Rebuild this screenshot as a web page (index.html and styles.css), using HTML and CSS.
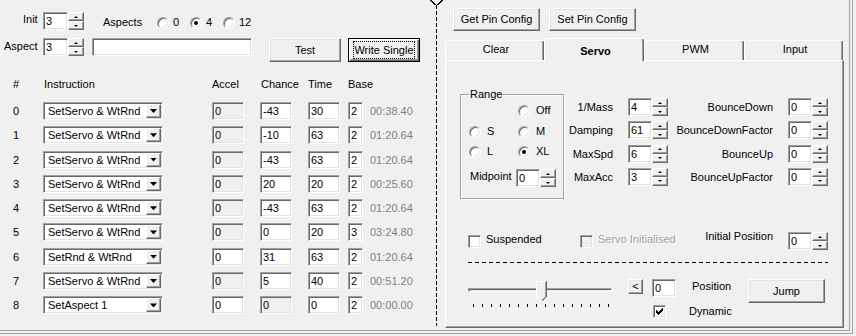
FILE: index.html
```html
<!DOCTYPE html>
<html lang="en">
<head>
  <meta charset="UTF-8" />
  <meta name="viewport" content="width=device-width, initial-scale=1.0"/>
  <title>Servo Config</title>
  <link rel="stylesheet" href="styles.css">
</head>
<body>
  <div class="outer">
    <div class="window">

      <div class="left">
        <div class="row-init">
          <span class="lbl-init">Init</span>
          <span class="spin spin-wide"><input class="edit" value="3"><span class="updown"><span class="ud up"></span><span class="ud down"></span></span></span>
          <span class="lbl-aspects">Aspects</span>
          <label class="opt"><span class="radio"></span>0</label>
          <label class="opt"><span class="radio on"></span>4</label>
          <label class="opt"><span class="radio"></span>12</label>
        </div>

        <div class="row-aspect">
          <span class="lbl-aspect">Aspect</span>
          <span class="spin spin-wide"><input class="edit" value="3"><span class="updown"><span class="ud up"></span><span class="ud down"></span></span></span>
          <input class="edit edit-long" value="">
          <button class="btn btn-test">Test</button>
          <button class="btn btn-write">Write Single</button>
        </div>

        <div class="thead">
          <span class="rnum">#</span>
          <span class="th-instr">Instruction</span>
          <span>Accel</span>
          <span class="th-chance">Chance</span>
          <span>Time</span>
          <span>Base</span>
        </div>

        <div class="trows">
          <div class="trow">
            <span class="rnum">0</span>
            <div class="combo"><span class="combo-text">SetServo &amp; WtRnd</span><span class="drop"></span></div>
            <input class="edit e-num ro" value="0"><input class="edit e-num" value="-43"><input class="edit e-num" value="30"><input class="edit e-base" value="2">
            <span class="ttime">00:38.40</span>
          </div>
          <div class="trow">
            <span class="rnum">1</span>
            <div class="combo"><span class="combo-text">SetServo &amp; WtRnd</span><span class="drop"></span></div>
            <input class="edit e-num ro" value="0"><input class="edit e-num" value="-10"><input class="edit e-num" value="63"><input class="edit e-base" value="2">
            <span class="ttime">01:20.64</span>
          </div>
          <div class="trow">
            <span class="rnum">2</span>
            <div class="combo"><span class="combo-text">SetServo &amp; WtRnd</span><span class="drop"></span></div>
            <input class="edit e-num ro" value="0"><input class="edit e-num" value="-43"><input class="edit e-num" value="63"><input class="edit e-base" value="2">
            <span class="ttime">01:20.64</span>
          </div>
          <div class="trow">
            <span class="rnum">3</span>
            <div class="combo"><span class="combo-text">SetServo &amp; WtRnd</span><span class="drop"></span></div>
            <input class="edit e-num ro" value="0"><input class="edit e-num" value="20"><input class="edit e-num" value="20"><input class="edit e-base" value="2">
            <span class="ttime">00:25.60</span>
          </div>
          <div class="trow">
            <span class="rnum">4</span>
            <div class="combo"><span class="combo-text">SetServo &amp; WtRnd</span><span class="drop"></span></div>
            <input class="edit e-num ro" value="0"><input class="edit e-num" value="-43"><input class="edit e-num" value="63"><input class="edit e-base" value="2">
            <span class="ttime">01:20.64</span>
          </div>
          <div class="trow">
            <span class="rnum">5</span>
            <div class="combo"><span class="combo-text">SetServo &amp; WtRnd</span><span class="drop"></span></div>
            <input class="edit e-num ro" value="0"><input class="edit e-num" value="0"><input class="edit e-num" value="20"><input class="edit e-base" value="3">
            <span class="ttime">03:24.80</span>
          </div>
          <div class="trow">
            <span class="rnum">6</span>
            <div class="combo"><span class="combo-text">SetRnd &amp; WtRnd</span><span class="drop"></span></div>
            <input class="edit e-num" value="0"><input class="edit e-num" value="31"><input class="edit e-num" value="63"><input class="edit e-base" value="2">
            <span class="ttime">01:20.64</span>
          </div>
          <div class="trow">
            <span class="rnum">7</span>
            <div class="combo"><span class="combo-text">SetServo &amp; WtRnd</span><span class="drop"></span></div>
            <input class="edit e-num ro" value="0"><input class="edit e-num" value="5"><input class="edit e-num" value="40"><input class="edit e-base" value="2">
            <span class="ttime">00:51.20</span>
          </div>
          <div class="trow">
            <span class="rnum">8</span>
            <div class="combo"><span class="combo-text">SetAspect 1</span><span class="drop"></span></div>
            <input class="edit e-num" value="0"><input class="edit e-num ro" value="0"><input class="edit e-num" value="0"><input class="edit e-base" value="2">
            <span class="ttime">00:00.00</span>
          </div>
        </div>
      </div>

      <div class="splitter">
        <svg class="fork" width="13" height="6" viewBox="0 0 13 6" shape-rendering="crispEdges">
          <path d="M0.5 0 L5.5 5 M12.5 0 L7.5 5" stroke="#000" fill="none"/>
        </svg>
      </div>

      <div class="right">
        <div class="pinbtns">
          <button class="btn btn-pin">Get Pin Config</button>
          <button class="btn btn-pin">Set Pin Config</button>
        </div>

        <div class="tabs">
          <div class="tab">Clear</div>
          <div class="tab tab-on">Servo</div>
          <div class="tab tab-wide">PWM</div>
          <div class="tab">Input</div>
        </div>

        <div class="tab-page">
          <div class="servo-top">
            <div class="group">
              <span class="group-label">Range</span>
              <div class="range">
                <span></span>
                <label class="opt2"><span class="radio"></span>Off</label>
                <label class="opt2"><span class="radio"></span>S</label>
                <label class="opt2"><span class="radio"></span>M</label>
                <label class="opt2"><span class="radio"></span>L</label>
                <label class="opt2"><span class="radio on"></span>XL</label>
              </div>
              <div class="mid">
                <span class="mid-label">Midpoint</span>
                <span class="spin"><input class="edit" value="0"><span class="updown"><span class="ud up"></span><span class="ud down"></span></span></span>
              </div>
            </div>

            <div class="params">
              <span class="plabel">1/Mass</span>
              <span class="spin"><input class="edit" value="4"><span class="updown"><span class="ud up"></span><span class="ud down"></span></span></span>
              <span class="plabel">BounceDown</span>
              <span class="spin"><input class="edit" value="0"><span class="updown"><span class="ud up"></span><span class="ud down"></span></span></span>

              <span class="plabel">Damping</span>
              <span class="spin"><input class="edit" value="61"><span class="updown"><span class="ud up"></span><span class="ud down"></span></span></span>
              <span class="plabel">BounceDownFactor</span>
              <span class="spin"><input class="edit" value="0"><span class="updown"><span class="ud up"></span><span class="ud down"></span></span></span>

              <span class="plabel">MaxSpd</span>
              <span class="spin"><input class="edit" value="6"><span class="updown"><span class="ud up"></span><span class="ud down"></span></span></span>
              <span class="plabel">BounceUp</span>
              <span class="spin"><input class="edit" value="0"><span class="updown"><span class="ud up"></span><span class="ud down"></span></span></span>

              <span class="plabel">MaxAcc</span>
              <span class="spin"><input class="edit" value="3"><span class="updown"><span class="ud up"></span><span class="ud down"></span></span></span>
              <span class="plabel">BounceUpFactor</span>
              <span class="spin"><input class="edit" value="0"><span class="updown"><span class="ud up"></span><span class="ud down"></span></span></span>
            </div>
          </div>

          <div class="checks">
            <label class="chk chk-susp"><span class="cb"></span><span class="chk-text">Suspended</span></label>
            <label class="chk chk-init"><span class="cb cb-off"></span><span class="chk-text">Servo Initialised</span></label>
            <span class="ilabel">Initial Position</span>
            <span class="spin spin-low"><input class="edit" value="0"><span class="updown"><span class="ud up"></span><span class="ud down"></span></span></span>
          </div>

          <div class="dash"></div>

          <div class="servo-bottom">
            <div class="slider">
              <div class="track"></div>
              <div class="ticks"></div>
              <svg class="thumb" width="11" height="21" viewBox="0 0 11 21" shape-rendering="crispEdges">
                <path d="M0 0 H11 V16 L5.5 21.5 L0 16 Z" fill="#f0f0f0"/>
                <path d="M0.5 16 V0.5 H10" stroke="#fff" fill="none"/>
                <path d="M0.5 15.5 L5 20" stroke="#fff" fill="none"/>
                <path d="M10.5 0 V15.5 L5.5 20.5" stroke="#696969" fill="none"/>
                <path d="M9.5 1 V15.5 L5.5 19.5" stroke="#a0a0a0" fill="none"/>
              </svg>
            </div>

            <div class="posblk">
              <div class="posrow">
                <button class="btn btn-small">&lt;</button>
                <input class="edit edit-pos" value="0">
                <span class="poslabel">Position</span>
              </div>
              <div class="dynrow">
                <span class="cb cb-dyn">
                  <svg width="7" height="7" viewBox="0 0 7 7" shape-rendering="crispEdges"><path d="M0 2 L2 4 L6 0 L7 0 L7 2 L2 7 L0 5 Z" fill="#000"/></svg>
                </span>
                <span class="dynlabel">Dynamic</span>
              </div>
            </div>

            <button class="btn btn-jump">Jump</button>
          </div>
        </div>
      </div>

    </div>
  </div>
</body>
</html>
```

FILE: styles.css
```css
* {
  box-sizing: border-box;
}

body {
  margin: 0;
  width: 856px;
  height: 336px;
  overflow: hidden;
  background: #f0f0f0;
  color: #000;
  font: 11px/13px "Liberation Sans", Arial, sans-serif;
}

/* window frame */
.outer {
  width: 853px;
  height: 334px;
  padding: 0 2px 2px 0;
  border-right: 1px solid #a0a0a0;
  border-bottom: 1px solid #a0a0a0;
}

.window {
  display: flex;
  width: 100%;
  height: 100%;
  border-right: 1px solid #a0a0a0;
  border-bottom: 1px solid #a0a0a0;
}

/* classic controls */
.edit {
  margin: 0;
  height: 18px;
  padding: 0 0 0 2px;
  font: inherit;
  color: #000;
  background: #fff;
  border: 1px solid;
  border-color: #a0a0a0 #fff #fff #a0a0a0;
  box-shadow: inset 1px 1px #696969, inset -1px -1px #e3e3e3;
  outline: none;
}

.edit.ro {
  background: #f0f0f0;
}

.btn {
  margin: 0;
  padding: 0;
  font: inherit;
  color: #000;
  background: #f0f0f0;
  border: 1px solid;
  border-color: #fff #696969 #696969 #fff;
  box-shadow: inset -1px -1px #a0a0a0, inset 1px 1px #e3e3e3;
}

.spin {
  display: flex;
  height: 18px;
}

.spin .edit {
  width: 24px;
}

.spin-wide .edit {
  width: 25px;
}

.updown {
  display: flex;
  flex-direction: column;
  width: 16px;
  height: 18px;
}

.ud {
  flex: 1;
  display: flex;
  align-items: center;
  justify-content: center;
  background: #f0f0f0;
  border: 1px solid;
  border-color: #fff #696969 #696969 #fff;
  box-shadow: inset -1px -1px #a0a0a0;
}

.ud::after {
  content: "";
  border-left: 2px solid transparent;
  border-right: 2px solid transparent;
}

.up::after {
  border-bottom: 2px solid #000;
}

.down::after {
  border-top: 2px solid #000;
}

.radio {
  position: relative;
  flex: none;
  width: 12px;
  height: 12px;
  border-radius: 50%;
  background: #fff;
  border: 1px solid;
  border-color: #a0a0a0 #fff #fff #a0a0a0;
  box-shadow: inset 1px 1px #696969, inset -1px -1px #e3e3e3;
}

.radio.on::after {
  content: "";
  position: absolute;
  left: 3px;
  top: 3px;
  width: 4px;
  height: 4px;
  border-radius: 50%;
  background: #000;
}

.cb {
  flex: none;
  display: flex;
  align-items: center;
  justify-content: center;
  width: 13px;
  height: 13px;
  background: #fff;
  border: 1px solid;
  border-color: #a0a0a0 #fff #fff #a0a0a0;
  box-shadow: inset 1px 1px #696969, inset -1px -1px #e3e3e3;
}

.cb-off {
  background: #f0f0f0;
}

.combo {
  display: flex;
  width: 120px;
  height: 18px;
  background: #fff;
  border: 1px solid;
  border-color: #a0a0a0 #fff #fff #a0a0a0;
  box-shadow: inset 1px 1px #696969, inset -1px -1px #e3e3e3;
}

.combo-text {
  flex: 1;
  padding-left: 4px;
  line-height: 16px;
  white-space: nowrap;
}

.drop {
  display: flex;
  align-items: center;
  justify-content: center;
  width: 15px;
  margin: 1px;
  background: #f0f0f0;
  border: 1px solid;
  border-color: #fff #696969 #696969 #fff;
  box-shadow: inset -1px -1px #a0a0a0;
}

.drop::after {
  content: "";
  width: 7px;
  height: 4px;
  background: #000;
  clip-path: polygon(0 0, 100% 0, 50% 100%);
}

/* left side */
.left {
  width: 436px;
  flex: none;
}

.row-init {
  display: flex;
  align-items: flex-start;
  height: 18px;
  margin-top: 12px;
}

.lbl-init {
  width: 20px;
  margin: 1px 0 0 23px;
}

.lbl-aspects {
  width: 54px;
  margin: 4px 0 0 19px;
}

.opt {
  display: flex;
  align-items: flex-start;
  width: 33px;
  margin-top: 4px;
}

.opt .radio {
  margin: 1px 4px 0 0;
}

.row-aspect {
  display: flex;
  align-items: flex-start;
  margin-top: 8px;
}

.lbl-aspect {
  width: 39px;
  margin: 2px 0 0 4px;
}

.edit-long {
  width: 160px;
  margin-left: 8px;
}

.btn-test,
.btn-write {
  width: 72px;
  height: 24px;
}

.btn-test {
  margin-left: 17px;
}

.btn-write {
  position: relative;
  margin-left: 7px;
  border: 1px solid #000;
  box-shadow: inset 1px 1px #fff, inset -1px -1px #696969, inset -2px -2px #a0a0a0;
}

.btn-write::after {
  content: "";
  position: absolute;
  inset: 2px 4px;
  border: 1px dotted #000;
}

.thead,
.trow {
  display: grid;
  grid-template-columns: 43px 169px 48px 48px 40px 22px 1fr;
}

.thead {
  margin-top: 16px;
}

.th-instr,
.th-chance {
  padding-left: 1px;
}

.rnum {
  padding-left: 13px;
}

.trows {
  margin-top: 11px;
}

.trow {
  height: 24.3px;
  align-items: start;
}

.trow .rnum {
  padding-top: 3px;
}

.e-num {
  width: 32px;
}

.e-base {
  width: 15px;
}

.ttime {
  padding-top: 3px;
  color: #808080;
}

/* dashed splitter */
.splitter {
  position: relative;
  flex: none;
  width: 1px;
  height: 326px;
  padding-top: 5px;
  background: repeating-linear-gradient(to bottom, #000 0 4px, transparent 4px 6px);
  background-origin: content-box;
  background-clip: content-box;
}

.fork {
  position: absolute;
  top: 0;
  left: -6px;
}

/* right side */
.right {
  flex: 1;
}

.pinbtns {
  display: flex;
  gap: 9px;
  margin: 8px 0 0 16px;
}

.btn-pin {
  width: 87px;
  height: 23px;
}

.tabs {
  position: relative;
  z-index: 1;
  display: flex;
  align-items: flex-end;
  height: 22px;
  margin: 7px 0 0 8px;
}

.tab {
  width: 99px;
  height: 20px;
  padding: 2px 0 0 3px;
  text-align: center;
  background: #f0f0f0;
  border: 1px solid;
  border-bottom: 0;
  border-color: #fff #696969 transparent #fff;
  border-radius: 3px 3px 0 0;
  box-shadow: inset -1px 0 #a0a0a0;
}

.tab-wide {
  width: 100px;
}

.tab-on {
  width: 100px;
  height: 23px;
  margin-bottom: -1px;
  padding-top: 6px;
  font-weight: bold;
}

.tab-page {
  width: 399px;
  height: 268px;
  margin-left: 8px;
  padding-left: 14px;
  border: 1px solid;
  border-color: #fff #696969 #696969 #fff;
  box-shadow: inset -1px -1px #a0a0a0;
}

.servo-top {
  display: flex;
  align-items: flex-start;
  margin-top: 33px;
}

.group {
  position: relative;
  flex: none;
  width: 104px;
  height: 105px;
  border: 1px solid #a0a0a0;
  box-shadow: inset 1px 1px #fff, 1px 1px #fff;
}

.group-label {
  position: absolute;
  top: -7px;
  left: 8px;
  padding: 0 1px;
  background: #f0f0f0;
}

.range {
  display: grid;
  grid-template-columns: 49px 1fr;
  grid-auto-rows: 20.5px;
  padding: 9px 0 0 8px;
}

.opt2 {
  display: flex;
  align-items: flex-start;
}

.opt2 .radio {
  margin: 1px 6px 0 0;
}

.mid {
  display: flex;
  align-items: flex-start;
  margin: 3.5px 0 0 9px;
}

.mid-label {
  width: 46px;
  margin-top: 1px;
}

.params {
  display: grid;
  grid-template-columns: 64px 40px 120px 40px;
  grid-auto-rows: 23.33px;
  margin-top: 4px;
}

.plabel {
  padding: 3px 15px 0 0;
  text-align: right;
  white-space: nowrap;
}

.checks {
  display: flex;
  align-items: flex-start;
  height: 20px;
  margin: 31px 0 0 8px;
}

.chk {
  display: flex;
  align-items: flex-start;
}

.chk .cb {
  margin: 5px 5px 0 0;
}

.chk-text {
  margin-top: 3px;
  white-space: nowrap;
}

.chk-susp {
  width: 112px;
}

.chk-init {
  width: 100px;
  color: #a0a0a0;
  text-shadow: 1px 1px #fff;
}

.ilabel {
  width: 108px;
  padding-right: 15px;
  text-align: right;
}

.spin-low {
  margin-top: 2px;
}

.dash {
  width: 360px;
  height: 1px;
  margin: 12px 0 0 8px;
  background: repeating-linear-gradient(to right, #000 0 4px, transparent 4px 7px);
}

.servo-bottom {
  display: flex;
  align-items: flex-start;
  margin: 16px 0 0 8px;
}

.slider {
  position: relative;
  flex: none;
  width: 144px;
  height: 30px;
}

.track {
  height: 4px;
  margin-top: 9px;
  border: 1px solid;
  border-color: #a0a0a0 #fff #fff #a0a0a0;
  box-shadow: inset 1px 1px #696969, inset -1px -1px #e3e3e3;
}

.ticks {
  width: 136px;
  height: 3px;
  margin: 12px 0 0 5px;
  background: repeating-linear-gradient(to right, #000 0 1px, transparent 1px 9px);
}

.thumb {
  position: absolute;
  left: 68px;
  top: 2px;
}

.posblk {
  flex: none;
  width: 120px;
  margin-left: 16px;
}

.posrow {
  display: flex;
  align-items: flex-start;
  height: 18px;
}

.btn-small {
  width: 15px;
  height: 15px;
  line-height: 11px;
}

.edit-pos {
  width: 24px;
  margin-left: 9px;
}

.poslabel {
  margin: 1px 0 0 16px;
}

.dynrow {
  display: flex;
  align-items: flex-start;
  margin-top: 8px;
}

.cb-dyn {
  margin-left: 25px;
}

.dynlabel {
  margin-left: 23px;
}

.btn-jump {
  width: 77px;
  height: 24px;
}
```
